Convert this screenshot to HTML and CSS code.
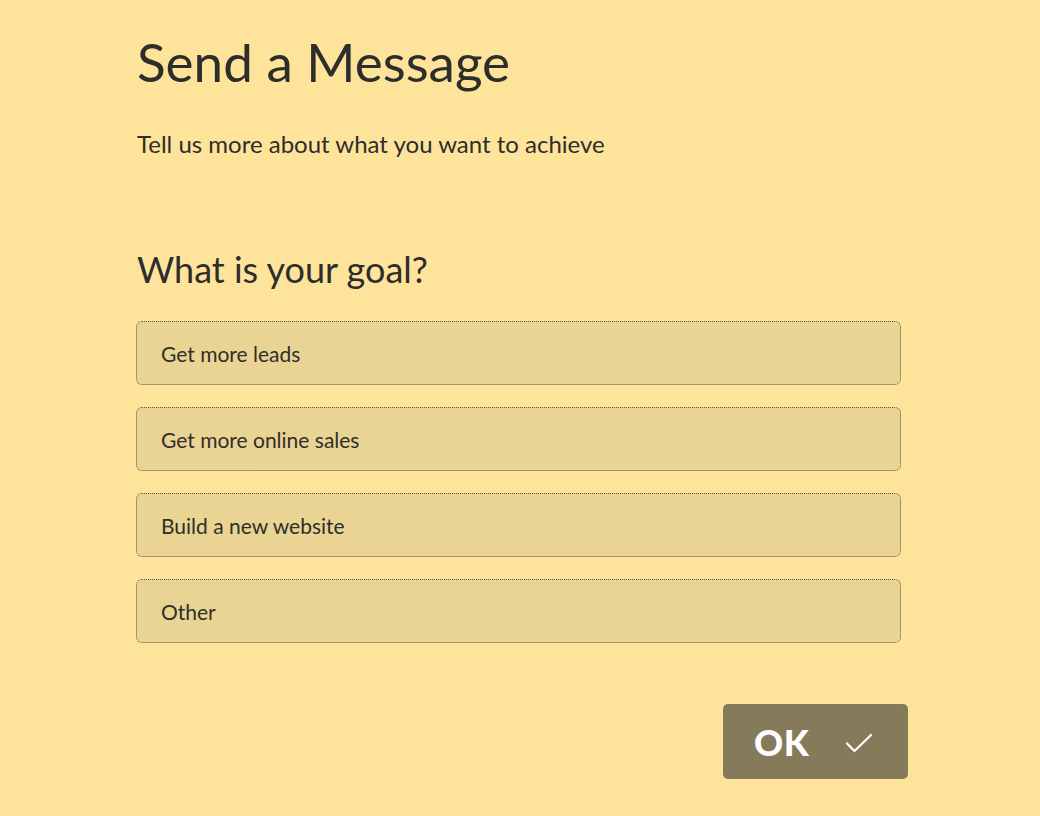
FILE: index.html
```html
<!DOCTYPE html>
<html lang="en">
<head>
<meta charset="utf-8">
<title>Send a Message</title>
<link rel="stylesheet" href="styles.css">
</head>
<body>
<main class="page">
  <h1 class="title">Send a Message</h1>
  <p class="subtitle">Tell us more about what you want to achieve</p>
  <h2 class="question">What is your goal?</h2>
  <div class="options">
    <div class="option">Get more leads</div>
    <div class="option">Get more online sales</div>
    <div class="option">Build a new website</div>
    <div class="option">Other</div>
  </div>
  <div class="actions">
    <button class="ok-btn" type="button">
      <span class="ok-label">OK</span>
      <svg class="ok-check" width="28" height="20" viewBox="0 0 28 20" aria-hidden="true">
        <path d="M2 10.5 L9.5 18 L26 2" fill="none" stroke="#ffffff" stroke-width="2.2" stroke-linecap="round" stroke-linejoin="round"/>
      </svg>
    </button>
  </div>
</main>
</body>
</html>
```
FILE: styles.css
```css
html, body {
  margin: 0;
  padding: 0;
  background: #fee49b;
}
body {
  font-family: Lato, "Open Sans", sans-serif;
  color: #2d2d2b;
  height: 816px;
  overflow: hidden;
}
.page {
  padding: 26px 132px 0 136px;
  display: flex;
  flex-direction: column;
}
.title {
  margin: 0;
  font-size: 53px;
  font-weight: 400;
  line-height: 72px;
  padding-left: 1px;
}
.subtitle {
  margin: 31px 0 0;
  font-size: 24px;
  line-height: 30px;
  padding-left: 1px;
}
.question {
  margin: 88px 0 0;
  font-size: 36px;
  font-weight: 400;
  line-height: 44px;
  padding-left: 1px;
}
.options {
  margin-top: 30px;
  display: flex;
  flex-direction: column;
  gap: 22px;
  width: 765px;
}
.option {
  height: 62px;
  box-sizing: content-box;
  border: 1px dotted #5e5847;
  border-radius: 6px;
  background: #e9d493;
  display: flex;
  align-items: center;
  padding: 0 24px;
  font-size: 21px;
  color: #2f2e2a;
}
.actions {
  display: flex;
  justify-content: flex-end;
  width: 772px;
  margin-top: 61px;
}
.ok-btn {
  width: 185px;
  height: 75px;
  border: none;
  border-radius: 5px;
  background: #857a5a;
  color: #ffffff;
  display: flex;
  align-items: center;
  padding: 0 0 0 31px;
  font-family: Lato, sans-serif;
  cursor: pointer;
}
.ok-label {
  font-size: 36px;
  font-weight: 900;
  letter-spacing: 0.5px;
}
.ok-check {
  margin-left: 36px;
  margin-top: 2px;
}
```
